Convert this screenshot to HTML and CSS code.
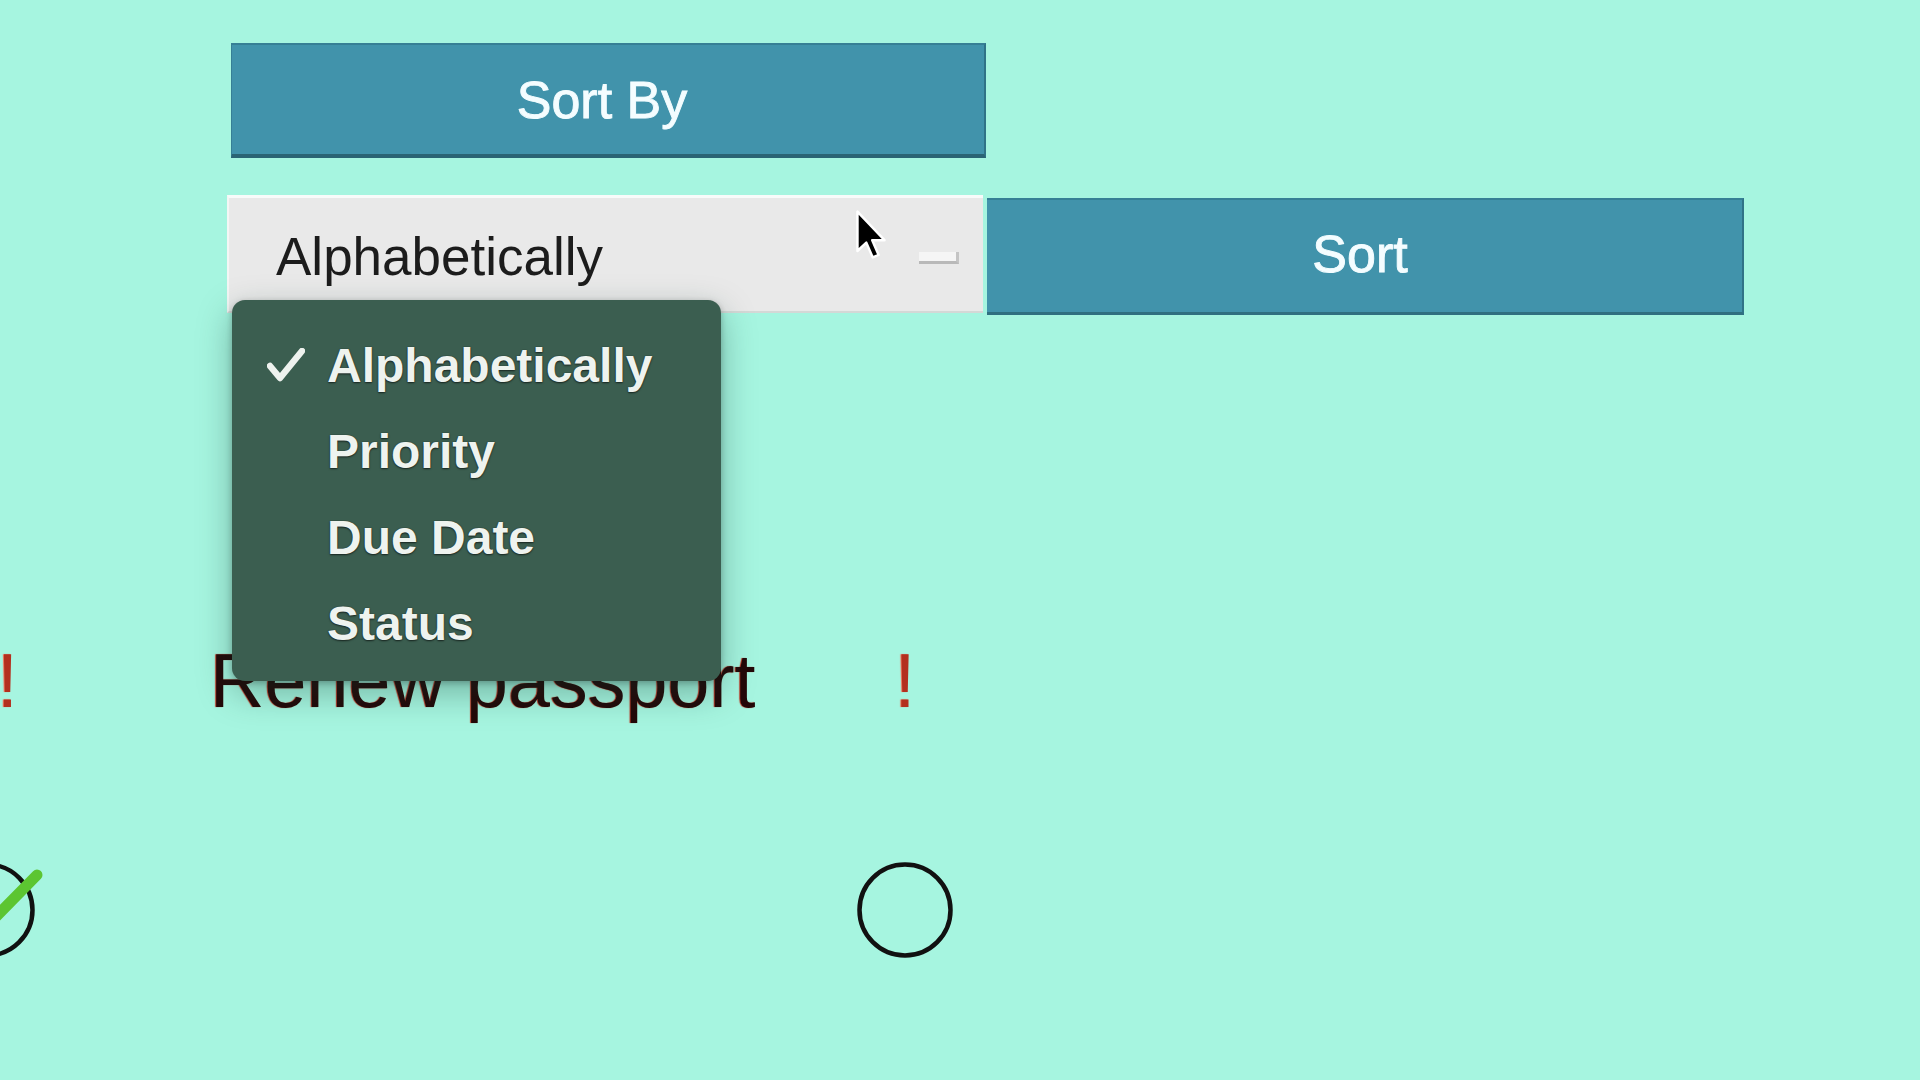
FILE: index.html
```html
<!DOCTYPE html>
<html lang="en">
<head>
<meta charset="utf-8">
<title>Sort tasks</title>
<link rel="stylesheet" href="styles.css">
</head>
<body>
<div class="page">
  <div class="sort-by">Sort By</div>
  <div class="controls">
    <div class="select">
      <span class="select-value">Alphabetically</span>
      <span class="select-arrow"></span>
      <svg class="cursor" width="32" height="54" viewBox="0 0 13 21">
        <path d="M1 1 L1 17 L4.6 13.6 L7.2 19.6 L9.6 18.6 L7 12.6 L12 12.6 Z" fill="#000" stroke="#fff" stroke-width="1" stroke-linejoin="round"/>
      </svg>
    </div>
    <div class="sort-btn">Sort</div>
  </div>

  <div class="task-row">
    <span class="col-a bang left-bang">!</span>
    <span class="col-b task-name">Renew passport</span>
    <span class="col-c bang">!</span>
  </div>

  <div class="status-row">
    <span class="col-a">
      <svg class="status done" width="96" height="96" viewBox="0 0 96 96">
        <circle cx="48" cy="48" r="45.5" fill="none" stroke="#111" stroke-width="4.5"/>
        <polyline points="18,44 42,70 98,13" fill="none" stroke="#5cc531" stroke-width="11" stroke-linecap="round" stroke-linejoin="round"/>
      </svg>
    </span>
    <span class="col-b"></span>
    <span class="col-c">
      <svg class="status" width="96" height="96" viewBox="0 0 96 96">
        <circle cx="48" cy="48" r="45.5" fill="none" stroke="#111" stroke-width="4.5"/>
      </svg>
    </span>
  </div>

  <ul class="menu">
    <li class="menu-item checked">
      <svg class="check" width="38" height="34" viewBox="0 0 38 34">
        <polyline points="3,18 13,30 35,3" fill="none" stroke="#eef2ee" stroke-width="6.5" stroke-linecap="round" stroke-linejoin="round"/>
      </svg>
      Alphabetically
    </li>
    <li class="menu-item">Priority</li>
    <li class="menu-item">Due Date</li>
    <li class="menu-item">Status</li>
  </ul>
</div>
</body>
</html>
```
FILE: styles.css
```css
html, body {
  margin: 0;
  padding: 0;
}
body {
  background: #a6f5e0;
  font-family: "Liberation Sans", Arial, sans-serif;
  width: 1920px;
  height: 1080px;
  overflow: hidden;
}
.page {
  position: relative;
  padding-top: 43px;
}
.sort-by {
  margin-left: 231px;
  width: 755px;
  height: 115px;
  box-sizing: border-box;
  background: #4193ab;
  border-top: 2px solid #367f95;
  border-left: 1px solid #367f95;
  border-right: 2px solid #2f7387;
  border-bottom: 4px solid #2a6474;
  color: #f4fdff;
  font-size: 52px;
  display: flex;
  align-items: center;
  justify-content: center;
  padding-top: 1px;
  padding-right: 12px;
  -webkit-text-stroke: 0.9px #f4fdff;
}
.controls {
  display: flex;
  align-items: flex-start;
  margin-top: 37px;
  margin-left: 227px;
  gap: 4px;
}
.select {
  position: relative;
  width: 756px;
  height: 118px;
  box-sizing: border-box;
  background: #e9e9e9;
  border-top: 3px solid #f8fbfa;
  border-left: 2px solid #f4f6f5;
  border-bottom: 2px solid #d4d8d6;
  display: flex;
  align-items: center;
  padding-left: 47px;
  padding-top: 4px;
}
.select-value {
  font-size: 53px;
  color: #1c1c1c;
  flex: 1;
}
.select-arrow {
  width: 40px;
  height: 12px;
  box-sizing: border-box;
  background: #f5f5f5;
  border-bottom: 3px solid #b9b9b9;
  border-right: 3px solid #c4c4c4;
  margin-right: 24px;
  margin-top: 2px;
}
.cursor {
  position: absolute;
  left: 626px;
  top: 10px;
}
.sort-btn {
  margin-top: 3px;
  width: 757px;
  height: 117px;
  box-sizing: border-box;
  background: #4193ab;
  border-top: 2px solid #367f95;
  border-right: 2px solid #2f7387;
  border-bottom: 3px solid #2f6f80;
  color: #f4fdff;
  font-size: 52px;
  display: flex;
  align-items: center;
  justify-content: center;
  padding-bottom: 4px;
  padding-right: 9px;
  -webkit-text-stroke: 0.9px #f4fdff;
}
.task-row,
.status-row {
  display: flex;
  align-items: center;
  margin-left: -61px;
}
.task-row {
  margin-top: 316px;
  height: 100px;
  font-size: 75.5px;
  line-height: 100px;
}
.status-row {
  margin-top: 131px;
  height: 96px;
}
.col-a {
  width: 96px;
  flex: none;
  display: flex;
  justify-content: flex-end;
}
.col-b {
  width: 649px;
  margin-left: 175px;
  flex: none;
}
.col-c {
  width: 96px;
  flex: none;
  display: flex;
  justify-content: center;
  margin-left: -2px;
}
.left-bang {
  padding-right: 17px;
  box-sizing: border-box;
}
.bang {
  color: #b3301f;
  text-shadow: -1px 0 1px #f06a52;
}
.task-name {
  color: #230808;
  text-shadow: -1px 0 1px #b8301f;
}
.status {
  display: block;
  overflow: visible;
}
.menu {
  position: absolute;
  left: 232px;
  top: 300px;
  width: 489px;
  height: 381px;
  box-sizing: border-box;
  margin: 0;
  padding: 23px 0 0 95px;
  list-style: none;
  background: #3b5e50;
  border-radius: 13px;
  box-shadow: 0 12px 34px rgba(20, 60, 50, 0.35), 0 2px 6px rgba(0, 0, 0, 0.25);
}
.menu-item {
  position: relative;
  height: 86px;
  line-height: 86px;
  font-size: 48px;
  font-weight: bold;
  color: #eef3ef;
  text-shadow: 0 1px 2px rgba(0, 0, 0, 0.6), 0 0 1px rgba(0, 0, 0, 0.6);
}
.check {
  position: absolute;
  left: -60px;
  top: 25px;
}
```
